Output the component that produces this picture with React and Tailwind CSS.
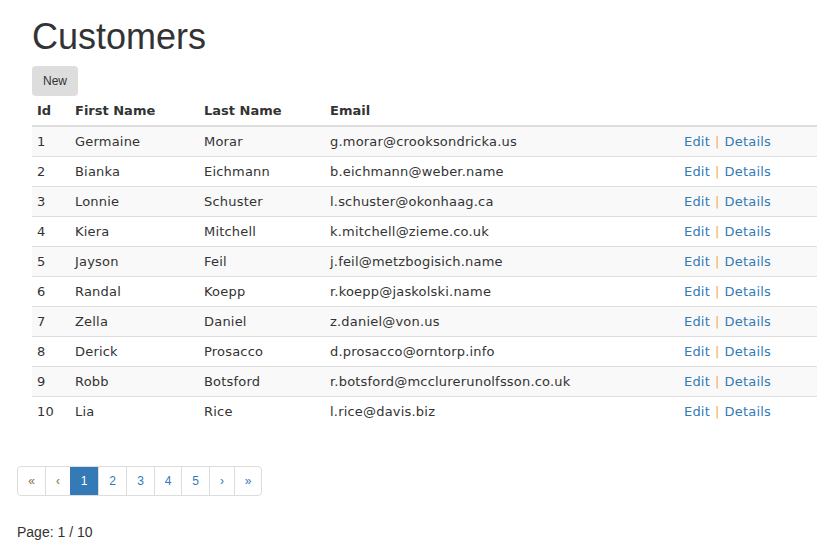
const customers = [
  { id: 1, first: "Germaine", last: "Morar", email: "g.morar@crooksondricka.us" },
  { id: 2, first: "Bianka", last: "Eichmann", email: "b.eichmann@weber.name" },
  { id: 3, first: "Lonnie", last: "Schuster", email: "l.schuster@okonhaag.ca" },
  { id: 4, first: "Kiera", last: "Mitchell", email: "k.mitchell@zieme.co.uk" },
  { id: 5, first: "Jayson", last: "Feil", email: "j.feil@metzbogisich.name" },
  { id: 6, first: "Randal", last: "Koepp", email: "r.koepp@jaskolski.name" },
  { id: 7, first: "Zella", last: "Daniel", email: "z.daniel@von.us" },
  { id: 8, first: "Derick", last: "Prosacco", email: "d.prosacco@orntorp.info" },
  { id: 9, first: "Robb", last: "Botsford", email: "r.botsford@mcclurerunolfsson.co.uk" },
  { id: 10, first: "Lia", last: "Rice", email: "l.rice@davis.biz" },
];

// anchos con borde incluido
const pages = [
  { label: "«", cls: "w-[27px] text-[#8a6d3b]" },
  { label: "‹", cls: "w-[25px] text-[#8a6d3b] border-l" },
  { label: "1", cls: "w-[28px] bg-[#337ab7] text-white" },
  { label: "2", cls: "w-[28px] text-[#337ab7] border-l" },
  { label: "3", cls: "w-[28px] text-[#337ab7] border-l" },
  { label: "4", cls: "w-[27px] text-[#337ab7] border-l" },
  { label: "5", cls: "w-[28px] text-[#337ab7] border-l" },
  { label: "›", cls: "w-[25px] text-[#337ab7] border-l" },
  { label: "»", cls: "w-[27px] text-[#337ab7] border-l" },
];

const cols = "grid grid-cols-[38px_129px_126px_354px_1fr] items-center";

const App = () => {
  return (
    <div className="w-[827px] h-[545px] bg-white text-[#333] font-['Liberation_Sans',Arial,sans-serif] overflow-hidden">
      <div className="pl-[32px]">
        <h1 className="pt-[17px] text-[36px] leading-[40px] h-[66px]">Customers</h1>
        <button className="w-[46px] h-[30px] bg-[#ddd] rounded-[4px] text-[12px] text-[#333]">New</button>

        {/* Tabla de clientes */}
        <div className="w-[785px] font-['DejaVu_Sans',Verdana,sans-serif] text-[13px]">
          <div className={`${cols} h-[31px] border-b-2 border-[#ddd] font-bold`}>
            <div className="pl-[5px]">Id</div>
            <div className="pl-[5px]">First Name</div>
            <div className="pl-[5px]">Last Name</div>
            <div className="pl-[5px]">Email</div>
            <div></div>
          </div>
          {customers.map((c, i) => (
            <div
              key={c.id}
              className={`${cols} tracking-[0.2px] ${i === 0 ? "h-[29px]" : "h-[30px] border-t border-[#ddd]"} ${i % 2 === 0 ? "bg-[#f9f9f9]" : ""}`}
            >
              <div className="pl-[5px]">{c.id}</div>
              <div className="pl-[5px]">{c.first}</div>
              <div className="pl-[5px]">{c.last}</div>
              <div className="pl-[5px]">{c.email}</div>
              <div className="pl-[5px]">
                <span className="text-[#337ab7]">Edit</span>
                <span className="text-[#f0ad4e] mx-[5px]">|</span>
                <span className="text-[#337ab7]">Details</span>
              </div>
            </div>
          ))}
        </div>
      </div>

      {/* Paginación */}
      <div className="pl-[17px] pt-[40px]">
        <div className="inline-flex h-[30px] border border-[#ddd] rounded-[4px] overflow-hidden text-[12px]">
          {pages.map((p, i) => (
            <div key={i} className={`flex items-center justify-center border-[#ddd] ${p.cls}`}>
              {p.label}
            </div>
          ))}
        </div>
        <div className="mt-[26px] text-[14px] text-[#333]">Page: 1 / 10</div>
      </div>
    </div>
  );
};

export default App;
